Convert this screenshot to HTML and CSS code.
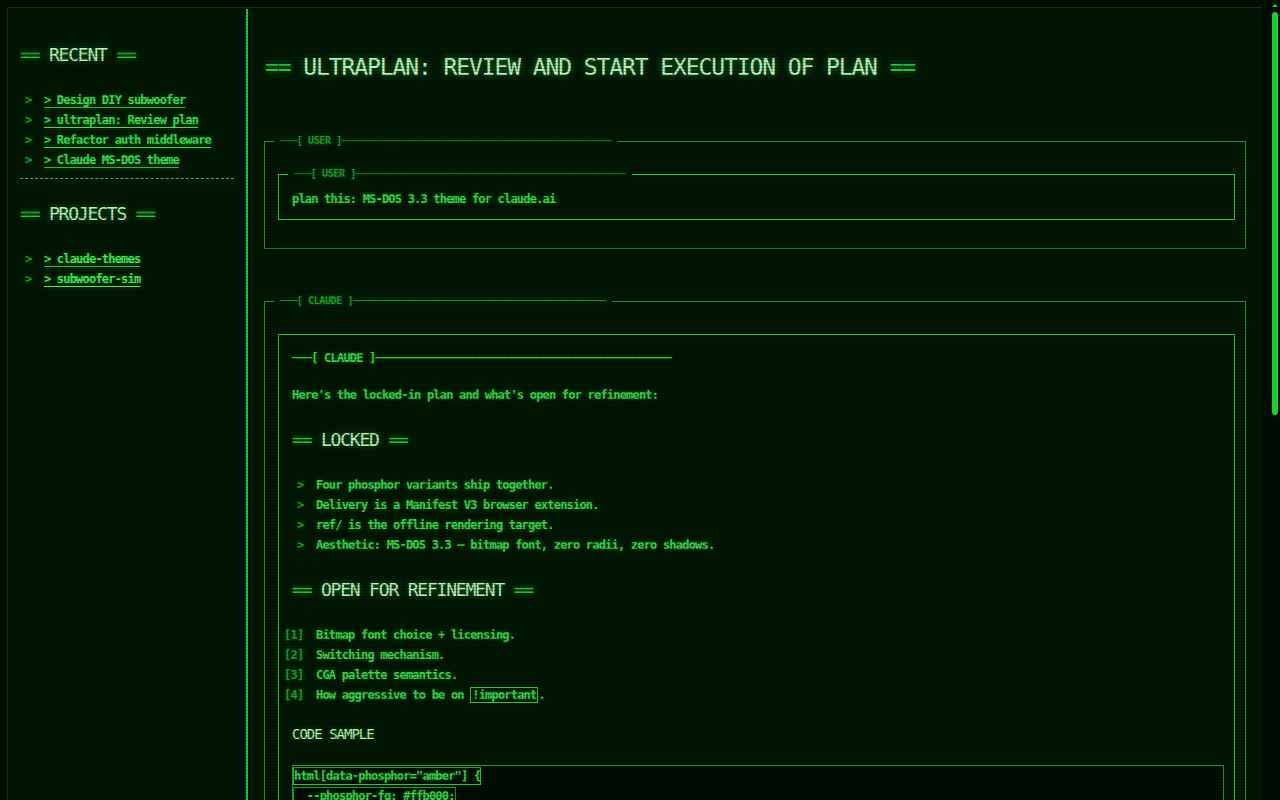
FILE: index.html
```html
<!DOCTYPE html>
<html lang="en">
<head>
  <meta charset="UTF-8" />
  <title>ultraplan: Review plan</title>
  <link rel="stylesheet" href="styles.css">
</head>
<body>

  <!-- CRT scanlines over everything -->
  <div class="scanlines"></div>

  <!-- Phosphor scrollbar -->
  <div class="scrollbar">
    <div class="scroll-up"></div>
    <div class="scroll-thumb"></div>
  </div>

  <div class="app">

    <!-- Sidebar -->
    <nav class="sidebar">
      <h2 class="side-title"><span class="eq">==</span> RECENT <span class="eq">==</span></h2>
      <ul class="side-list">
        <li><a href="#">&gt; Design DIY subwoofer</a></li>
        <li><a href="#">&gt; ultraplan: Review plan</a></li>
        <li><a href="#">&gt; Refactor auth middleware</a></li>
        <li><a href="#">&gt; Claude MS-DOS theme</a></li>
      </ul>
      <hr class="rule">
      <h2 class="side-title"><span class="eq">==</span> PROJECTS <span class="eq">==</span></h2>
      <ul class="side-list">
        <li><a class="bright" href="#">&gt; claude-themes</a></li>
        <li><a class="bright" href="#">&gt; subwoofer-sim</a></li>
      </ul>
    </nav>

    <!-- Conversation -->
    <main class="main">
      <h1 class="page-title"><span class="eq">==</span> ULTRAPLAN: REVIEW AND START EXECUTION OF PLAN <span class="eq">==</span></h1>

      <fieldset class="msg">
        <legend>───[ USER ]────────────────────────────────────────────────</legend>
        <fieldset class="msg inner">
          <legend>───[ USER ]────────────────────────────────────────────────</legend>
          <p>plan this: MS-DOS 3.3 theme for claude.ai</p>
        </fieldset>
      </fieldset>

      <fieldset class="msg claude">
        <legend>───[ CLAUDE ]─────────────────────────────────────────────</legend>
        <div class="reply">
          <div class="reply-head">───[ CLAUDE ]──────────────────────────────────────────────</div>
          <p class="lead">Here's the locked-in plan and what's open for refinement:</p>

          <h3 class="sec-title"><span class="eq">==</span> LOCKED <span class="eq">==</span></h3>
          <ul class="bullets">
            <li>Four phosphor variants ship together.</li>
            <li>Delivery is a Manifest V3 browser extension.</li>
            <li>ref/ is the offline rendering target.</li>
            <li>Aesthetic: MS-DOS 3.3 – bitmap font, zero radii, zero shadows.</li>
          </ul>

          <h3 class="sec-title"><span class="eq">==</span> OPEN FOR REFINEMENT <span class="eq">==</span></h3>
          <ol class="numbered">
            <li>Bitmap font choice + licensing.</li>
            <li>Switching mechanism.</li>
            <li>CGA palette semantics.</li>
            <li>How aggressive to be on <code class="inline">!important</code>.</li>
          </ol>

          <h4 class="sub-title">CODE SAMPLE</h4>
          <pre class="code"><span class="code-line">html[data-phosphor="amber"] {</span><span class="code-line">  --phosphor-fg: #ffb000;</span><span class="code-line">  --phosphor-dim: #8a5c00;</span><span class="code-line">  --phosphor-bg: #140c00;</span><span class="code-line">}</span></pre>

          <p class="lead">Pick one of the open items and I'll start executing from there.</p>
        </div>
      </fieldset>

      <fieldset class="msg prompt">
        <legend>───[ PROMPT ]─────────────────────────────────────────────</legend>
        <div class="prompt-box">C:\&gt; <span class="cursor">_</span></div>
      </fieldset>
    </main>

  </div>
</body>
</html>
```

FILE: styles.css
```css
html {
  background: #000d01;
}

body {
  margin: 0;
  font-family: "DejaVu Sans Mono", "Liberation Mono", monospace;
  font-size: 12px;
  font-weight: bold;
  letter-spacing: -0.8px;
  line-height: 20px;
  color: #3bd94c;
  text-shadow: 0 0 4px rgba(40, 210, 60, 0.45);
}

.scanlines {
  position: fixed;
  top: 0;
  left: 0;
  width: 100%;
  height: 100%;
  pointer-events: none;
  z-index: 10;
  background: repeating-linear-gradient(to bottom, rgba(0, 0, 0, 0) 0, rgba(0, 0, 0, 0) 2px, rgba(0, 0, 0, 0.22) 2px, rgba(0, 0, 0, 0.22) 3px);
}

/* fake scrollbar pinned to the right edge */
.scrollbar {
  position: fixed;
  top: 0;
  right: 0;
  width: 10px;
  height: 100%;
  background: #000d01;
  z-index: 11;
}

.scroll-up {
  width: 0;
  height: 0;
  margin: 4px auto 0;
  border-left: 3px solid transparent;
  border-right: 3px solid transparent;
  border-bottom: 3px solid #22cc33;
}

.scroll-thumb {
  width: 6px;
  height: 403px;
  margin: 5px auto 0;
  border-radius: 3px;
  background: #22cc33;
}

.app {
  display: flex;
  margin: 7px 18px 0 7px;
  padding-top: 1px;
  border-top: 1px solid #0b3512;
  border-left: 1px solid #0b3512;
  background: #021703;
}

.eq {
  color: #22c433;
}

/* Sidebar */
.sidebar {
  width: 214px;
  flex-shrink: 0;
  padding: 0 12px;
  border-right: 2px solid #22cc33;
}

.side-title {
  margin: 34px 0 23px;
  font-size: 18px;
  font-weight: normal;
  letter-spacing: -1.2px;
  line-height: 24px;
  color: #bdf2bd;
  text-shadow: 0 0 6px rgba(70, 255, 100, 0.45);
}

.side-list {
  list-style: none;
  margin: 0;
  padding: 0;
}

.side-list li::before,
.bullets li::before {
  content: ">";
  display: inline-block;
  width: 19px;
  margin-left: 5px;
  color: #1f9e31;
}

.side-list a {
  color: #3fe052;
  text-decoration: underline;
  text-underline-offset: 3px;
}

.side-list a.bright {
  color: #45ee58;
}

.rule {
  border: 0;
  border-top: 1px dashed #22cc33;
  margin: 8px 0 0;
}

.rule + .side-title {
  margin-top: 23px;
}

/* Main column */
.main {
  flex: 1;
  min-width: 0;
  padding: 0 16px 560px 16px;
}

.page-title {
  margin: 43px 0 53px 1px;
  font-size: 23px;
  font-weight: normal;
  letter-spacing: -1.1px;
  line-height: 30px;
  color: #bdf2bd;
  text-shadow: 0 0 7px rgba(70, 255, 100, 0.5);
}

.msg {
  margin: 0;
  min-width: 0;
  padding: 21px 10px 28px 13px;
  border: 1px solid #1e9b2f;
}

.msg legend {
  margin-left: -4px;
  padding: 0 6px;
  font-size: 10px;
  letter-spacing: -0.4px;
  line-height: 12px;
  color: #1f9e31;
  white-space: nowrap;
}

.msg.inner {
  padding: 9px 10px 10px 13px;
  border-color: #22cc33;
}

.msg p {
  margin: 0;
}

.msg.claude {
  margin-top: 46px;
  padding-top: 27px;
}

.msg.prompt {
  margin-top: 46px;
}

.reply {
  border: 1px solid #22cc33;
  padding: 13px 10px 24px 13px;
}

.reply-head {
  white-space: nowrap;
  overflow: hidden;
}

.reply .lead {
  margin: 17px 0 0;
}

.sec-title {
  margin: 23px 0;
  font-size: 18px;
  font-weight: normal;
  letter-spacing: -1.2px;
  line-height: 24px;
  color: #bdf2bd;
  text-shadow: 0 0 6px rgba(70, 255, 100, 0.45);
}

.bullets,
.numbered {
  list-style: none;
  margin: 0;
  padding: 0;
}

.numbered {
  counter-reset: item;
}

.numbered li {
  counter-increment: item;
}

.numbered li::before {
  content: "[" counter(item) "]";
  display: inline-block;
  width: 32px;
  margin-left: -8px;
  color: #1f9e31;
}

.inline {
  font-family: inherit;
  border: 1px solid #22cc33;
  padding: 0 1px;
}

.sub-title {
  margin: 19px 0 21px;
  font-size: 14px;
  font-weight: normal;
  letter-spacing: -1px;
  line-height: 20px;
  color: #bdf2bd;
}

.code {
  margin: 0;
  padding: 1px 0 4px;
  border: 1px solid #1e9b2f;
  background: #010f02;
  font-family: inherit;
  font-size: inherit;
  line-height: 16px;
  white-space: pre;
}

.code-line {
  display: block;
  width: fit-content;
  margin-bottom: 2px;
  border: 1px solid #1e9b2f;
}

.code-line:first-child {
  border-color: #22cc33;
}

.prompt-box {
  border: 1px solid #22cc33;
  padding: 8px 13px;
}

.cursor {
  color: #45ee58;
}
```
